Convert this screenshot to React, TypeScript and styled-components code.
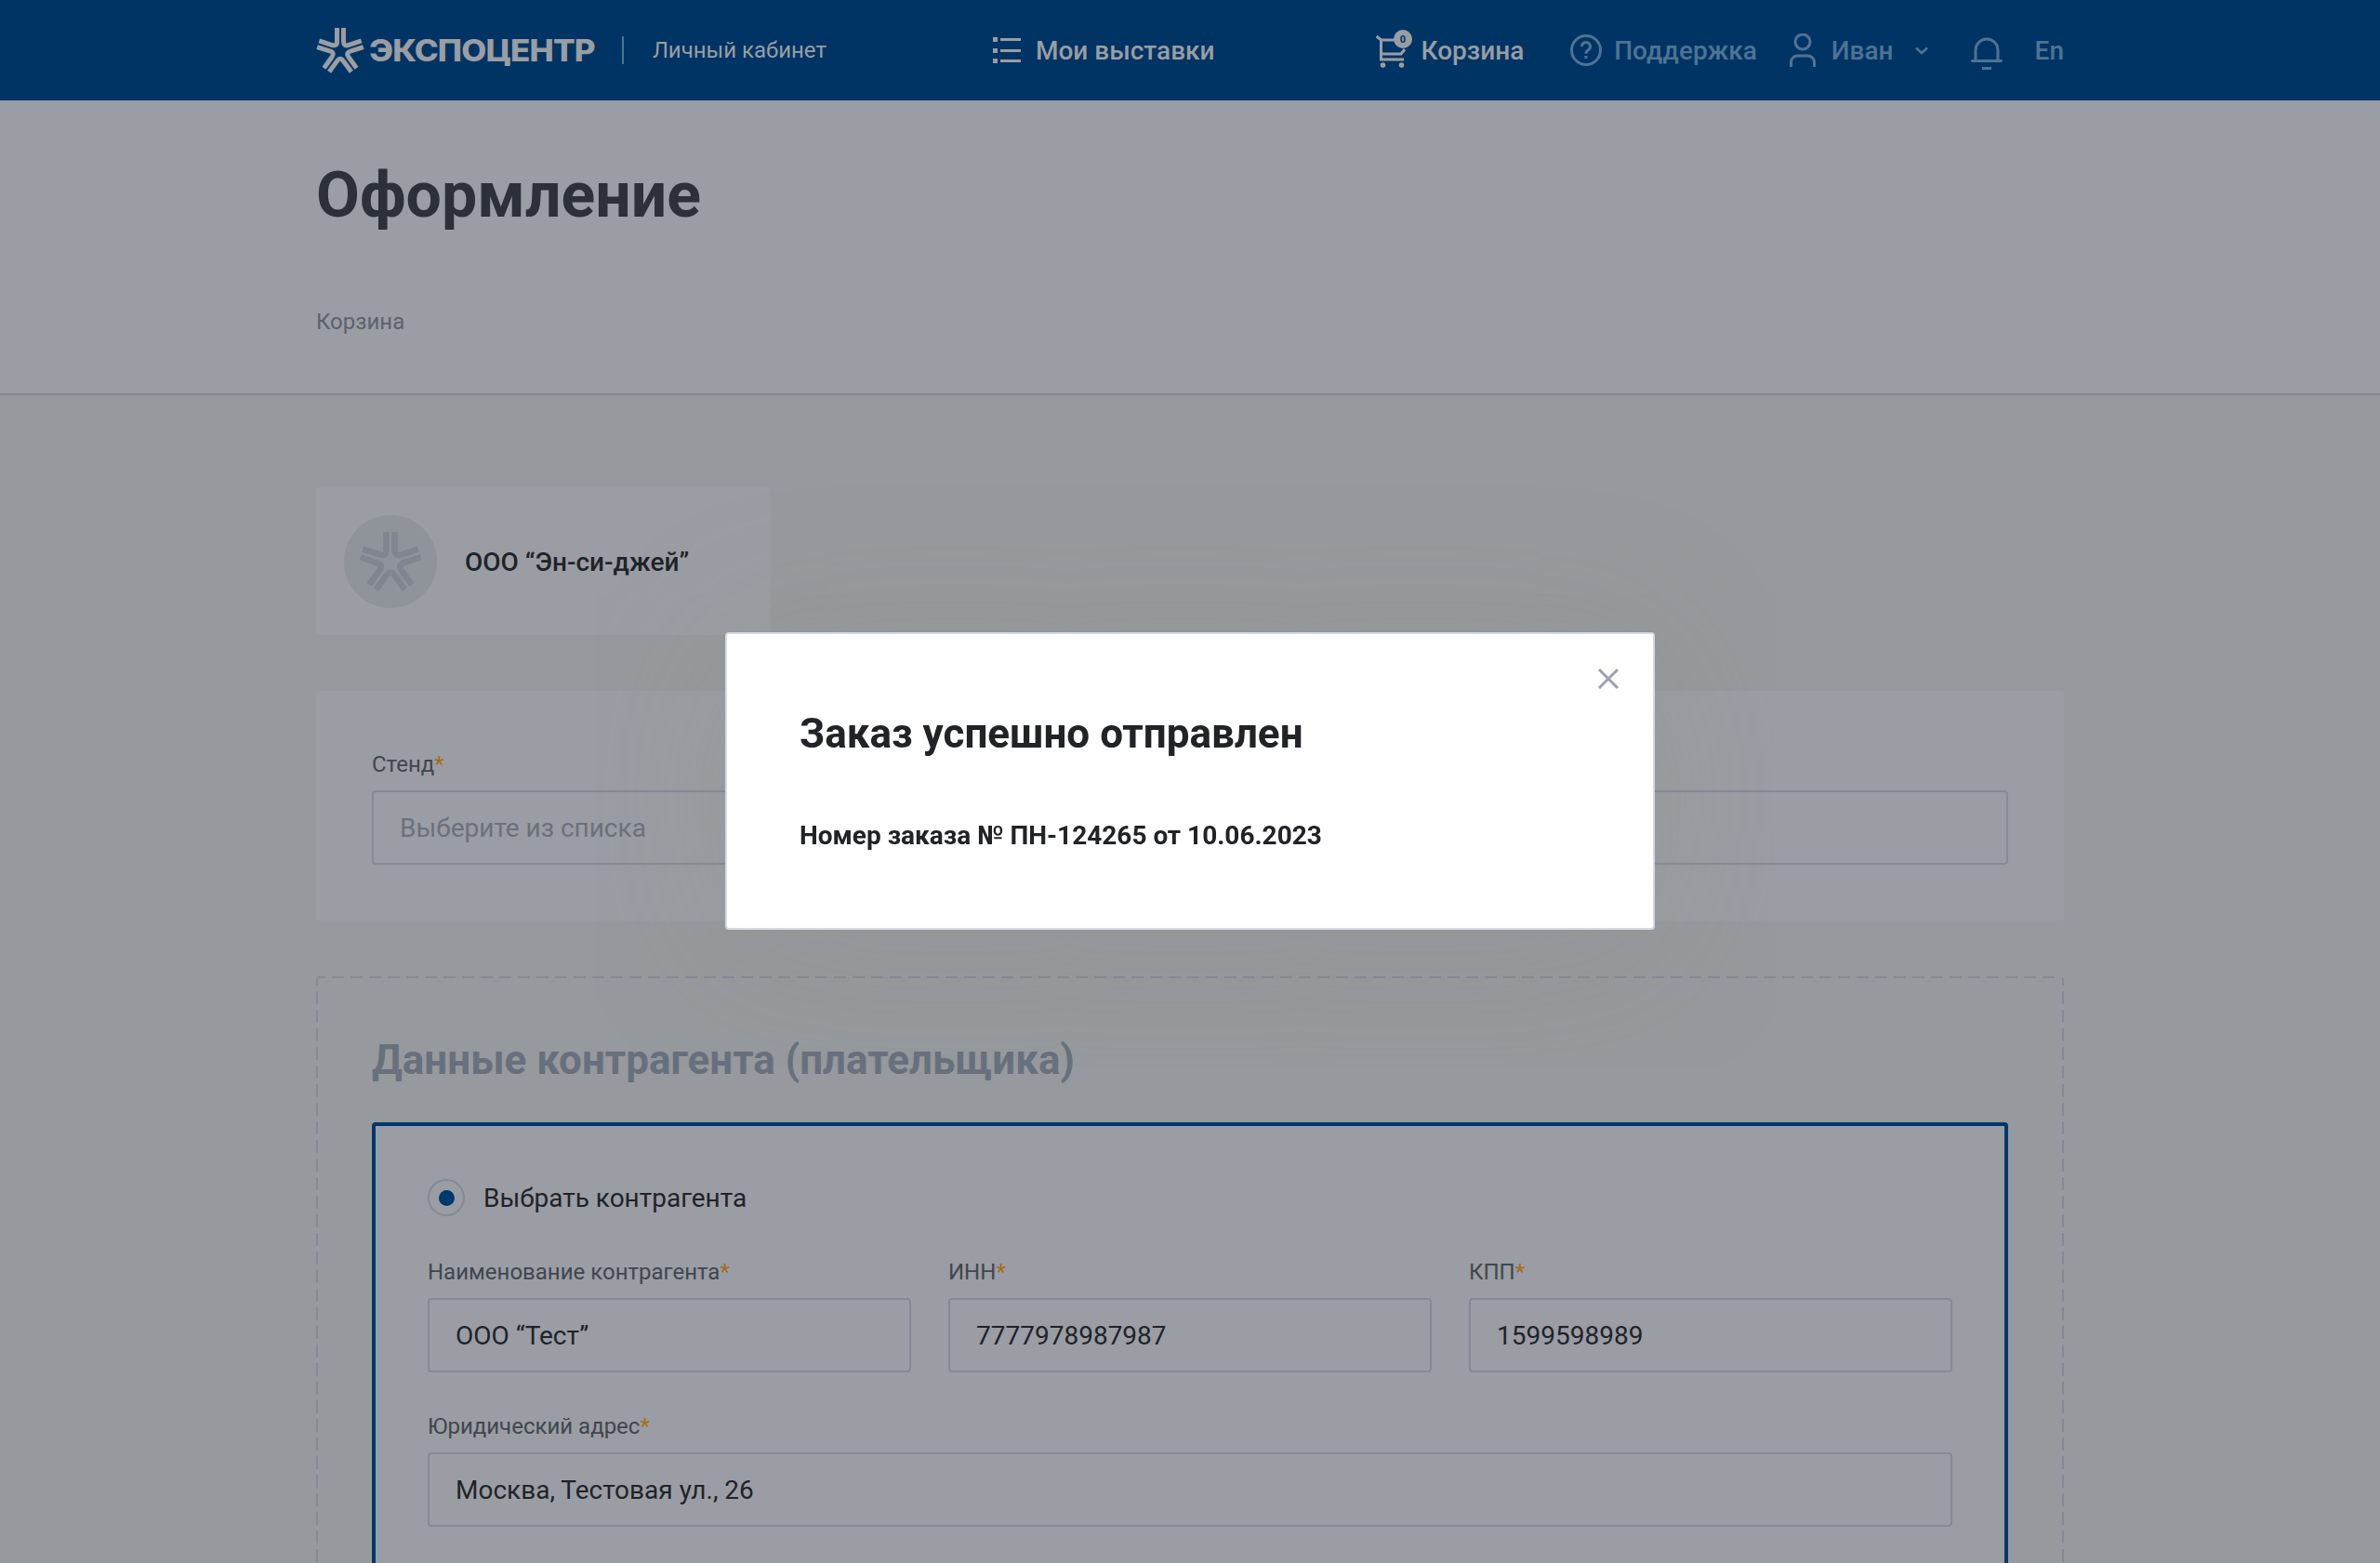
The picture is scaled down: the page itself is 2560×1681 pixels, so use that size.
import React from 'react';
import styled, { createGlobalStyle } from 'styled-components';

const Global = createGlobalStyle`
  html, body { margin: 0; padding: 0; height: 100%; overflow: hidden; background: #96999d; }
  body { font-family: Roboto, "Noto Sans", "Liberation Sans", sans-serif; }
  * { box-sizing: border-box; }
`;

const Page = styled.div`
  position: relative;
  width: 2560px;
  height: 1681px;
  overflow: hidden;
  background: #96999d;
`;
const Header = styled.header`
  height: 108px;
  background: #003464;
  display: flex;
  justify-content: center;
`;
const HeaderInner = styled.div`
  width: 1880px;
  display: flex;
  align-items: center;
`;
const WordMark = styled.span`
  display: inline-block;
  width: 245px;
  margin-left: 5px;
  font-family: Inter, "Liberation Sans", Arial, sans-serif;
  font-weight: 800;
  font-size: 32px;
  letter-spacing: -0.8px;
  color: #9a9da3;
  white-space: nowrap;
  transform: scaleX(1.095);
  transform-origin: left center;
`;
const Divider = styled.span`
  width: 2px;
  height: 30px;
  margin-left: 29px;
  background: #4f7394;
`;
const Cabinet = styled.span`
  margin-left: 31px;
  font-size: 24px;
  color: #9a9da3;
  white-space: nowrap;
`;
const NavItem = styled.div<{ $ml: number; $dim?: boolean; $mt?: number }>`
  margin-left: ${p => p.$ml}px;
  margin-top: ${p => p.$mt ?? 0}px;
  display: flex;
  align-items: center;
  font-size: 28px;
  font-weight: 500;
  white-space: nowrap;
  color: ${p => (p.$dim ? '#4f7394' : '#9a9da3')};
  svg { flex: none; }
`;
const NavLabel = styled.span<{ $ml: number }>`
  margin-left: ${p => p.$ml}px;
`;
const CartBox = styled.span`
  display: flex;
  margin-bottom: 4px;
`;
const TitleSection = styled.section`
  height: 317px;
  background: #9a9da3;
  border-bottom: 2px solid #848994;
  padding: 60px 340px 0;
`;
const Title = styled.h1`
  margin: 0;
  font-size: 68px;
  line-height: 84px;
  font-weight: 700;
  color: #2c3038;
`;
const Crumb = styled.div`
  margin-top: 78px;
  font-size: 24px;
  line-height: 32px;
  color: #5b626c;
`;
const Main = styled.main`
  padding: 99px 340px 0;
  display: flex;
  flex-direction: column;
`;
const CompanyCard = styled.div`
  width: 489px;
  height: 159px;
  padding: 0 30px;
  border-radius: 4px;
  background: #9a9da3;
  display: flex;
  align-items: center;
`;
const Avatar = styled.div`
  width: 100px;
  height: 100px;
  border-radius: 50%;
  background: #8f949b;
  display: flex;
  align-items: center;
  justify-content: center;
  flex: none;
`;
const CompanyName = styled.span`
  margin-left: 30px;
  margin-top: 2px;
  font-size: 28px;
  font-weight: 500;
  color: #1f2329;
  white-space: nowrap;
`;
const StandCard = styled.div`
  margin-top: 60px;
  height: 247px;
  padding: 62px 60px 0;
  border-radius: 4px;
  background: #9a9da3;
  display: grid;
  grid-template-columns: 1fr 1fr;
  column-gap: 40px;
  align-content: start;
`;
const Field = styled.div`
  display: flex;
  flex-direction: column;
  min-width: 0;
`;
const Label = styled.label`
  font-size: 24px;
  line-height: 34px;
  height: 45px;
  color: #40464f;
  white-space: nowrap;
`;
const Star = styled.span`
  color: #a96a17;
`;
const InputBox = styled.div<{ $placeholder?: boolean }>`
  height: 80px;
  padding: 0 28px;
  border: 2px solid #848a96;
  border-radius: 4px;
  display: flex;
  align-items: center;
  font-size: 28px;
  color: ${p => (p.$placeholder ? '#69717d' : '#1f2329')};
  white-space: nowrap;
`;
const PayerBox = styled.section`
  --dash: #848a96;
  margin-top: 60px;
  padding: 60px 60px 0;
  height: 800px;
  border-radius: 4px;
  background-image:
    repeating-linear-gradient(90deg, var(--dash) 0 13px, transparent 13px 20px),
    repeating-linear-gradient(180deg, var(--dash) 0 14px, transparent 14px 20px),
    repeating-linear-gradient(180deg, var(--dash) 0 14px, transparent 14px 20px);
  background-size: 100% 2px, 2px 100%, 2px 100%;
  background-position: -3px 0, 0 -4px, 100% -4px;
  background-repeat: no-repeat;
`;
const PayerTitle = styled.h2`
  margin: 0;
  font-size: 44px;
  line-height: 60px;
  font-weight: 700;
  color: #68707d;
  white-space: nowrap;
`;
const BlueBox = styled.div`
  margin-top: 37px;
  height: 700px;
  padding: 57px 56px 0;
  border: 4px solid #00386c;
  border-radius: 4px;
  background: #9a9da3;
`;
const RadioRow = styled.div`
  display: flex;
  align-items: center;
  height: 40px;
`;
const Radio = styled.span`
  width: 40px;
  height: 40px;
  border-radius: 50%;
  border: 2px solid #848a96;
  display: flex;
  align-items: center;
  justify-content: center;
  flex: none;
  &::after {
    content: '';
    width: 17px;
    height: 17px;
    border-radius: 50%;
    background: #00386c;
  }
`;
const RadioLabel = styled.span`
  margin-left: 20px;
  font-size: 28px;
  color: #1f2329;
`;
const FieldGrid = styled.div`
  margin-top: 43px;
  display: grid;
  grid-template-columns: repeat(3, 1fr);
  gap: 0 40px;
`;
const WideField = styled(Field)`
  margin-top: 41px;
`;
const Overlay = styled.div`
  position: fixed;
  inset: 0;
  padding-bottom: 1px;
  display: flex;
  align-items: center;
  justify-content: center;
`;
const Modal = styled.div`
  position: relative;
  width: 1000px;
  height: 320px;
  padding: 81px 78px 0;
  background: #fff;
  border: 2px solid #d5d9e3;
  border-radius: 4px;
  box-shadow: 0 20px 180px rgba(130, 140, 125, 0.22);
`;
const CloseButton = styled.button`
  position: absolute;
  top: 36px;
  right: 36px;
  width: 24px;
  height: 24px;
  padding: 0;
  border: 0;
  background: none;
  display: flex;
`;
const ModalTitle = styled.h3`
  margin: 0;
  font-size: 44px;
  line-height: 52px;
  font-weight: 700;
  color: #212326;
  white-space: nowrap;
`;
const ModalText = styled.p`
  margin: 66px 0 0;
  font-size: 28px;
  line-height: 36px;
  font-weight: 700;
  color: #212326;
  white-space: nowrap;
`;
const LogoSvg = styled.svg<{ $mt: number }>`
  flex: none;
  margin-top: ${p => p.$mt}px;
`;
const CartBadge = styled.text`
  font-family: Roboto, sans-serif;
  font-size: 11px;
  font-weight: 700;
  fill: #003464;
  text-anchor: middle;
`;

const Arm = 'M7,-50 L7,-22 Q7,-9.64 16.86,-12.84 L45.4,-22.1';
const Logo = ({ color, size, mt }: { color: string; size: number; mt: number }) => (
  <LogoSvg $mt={mt} width={size} height={size} viewBox="-52 -52 104 104">
    {[0, 72, 144, 216, 288].map(a => (
      <path key={a} d={Arm} transform={`rotate(${a})`} fill="none" stroke={color} strokeWidth={10} />
    ))}
  </LogoSvg>
);

const c = '#9a9da3';
const d = '#4f7394';

const ListIcon = () => (
  <svg width="30" height="28" viewBox="0 0 30 28">
    <g fill={c}>
      <rect x="0" y="0" width="5" height="5" />
      <rect x="0" y="12" width="5" height="5" />
      <rect x="0" y="23" width="5" height="5" />
      <rect x="8" y="1" width="22" height="3" />
      <rect x="8" y="13" width="22" height="3" />
      <rect x="8" y="24" width="22" height="3" />
    </g>
  </svg>
);
const CartIcon = () => (
  <svg width="40" height="41" viewBox="0 0 40 41">
    <g fill="none" stroke={c} strokeWidth="3">
      <path d="M0.500 7 L5.500 11 V32 H30" />
      <path d="M5.500 11 H26" />
      <path d="M5.500 26 H27 L31 21" />
    </g>
    <circle cx="7.500" cy="38" r="2.800" fill={c} />
    <circle cx="27.500" cy="38" r="2.800" fill={c} />
    <circle cx="29" cy="10" r="10" fill={c} />
    <CartBadge x="29" y="14">0</CartBadge>
  </svg>
);
const HelpIcon = () => (
  <svg width="34" height="34" viewBox="0 0 34 34">
    <circle cx="17" cy="17" r="15.500" fill="none" stroke={d} strokeWidth="3" />
    <path d="M12.500 13 a4.500 4.500 0 1 1 7 3.700 c-1.700 1.100 -2.500 2 -2.500 4" fill="none" stroke={d} strokeWidth="3" />
    <rect x="15.500" y="23" width="3" height="3" fill={d} />
  </svg>
);
const UserIcon = () => (
  <svg width="28" height="36" viewBox="0 0 28 36">
    <circle cx="14" cy="9" r="8" fill="none" stroke={d} strokeWidth="3" />
    <path d="M1.500 36 V31 a7 7 0 0 1 7 -7 h11 a7 7 0 0 1 7 7 v5" fill="none" stroke={d} strokeWidth="3" />
  </svg>
);
const Chevron = () => (
  <svg width="14" height="9" viewBox="0 0 14 9">
    <path d="M1 1.500 L7 7 L13 1.500" fill="none" stroke={d} strokeWidth="2.500" />
  </svg>
);
const BellIcon = () => (
  <svg width="34" height="36" viewBox="0 0 34 36">
    <path d="M5 26 V15 a12 12 0 0 1 24 0 V26" fill="none" stroke={d} strokeWidth="3" />
    <rect x="0" y="25" width="34" height="3" rx="1.500" fill={d} />
    <rect x="12" y="33" width="10" height="3" fill={d} />
  </svg>
);
const CloseIcon = () => (
  <svg width="24" height="24" viewBox="0 0 24 24">
    <path d="M2 2 L22 22 M22 2 L2 22" stroke="#9ba2b0" strokeWidth="3" fill="none" />
  </svg>
);

export default function App() {
  return (
    <Page>
      <Global />
      <Header>
        <HeaderInner>
          <Logo color={c} size={52} mt={2} />
          <WordMark>ЭКСПОЦЕНТР</WordMark>
          <Divider />
          <Cabinet>Личный кабинет</Cabinet>
          <NavItem $ml={179}>
            <ListIcon />
            <NavLabel $ml={16}>Мои выставки</NavLabel>
          </NavItem>
          <NavItem $ml={173}>
            <CartBox><CartIcon /></CartBox>
            <NavLabel $ml={9}>Корзина</NavLabel>
          </NavItem>
          <NavItem $ml={50} $dim>
            <HelpIcon />
            <NavLabel $ml={13}>Поддержка</NavLabel>
          </NavItem>
          <NavItem $ml={35} $dim>
            <UserIcon />
            <NavLabel $ml={17}>Иван</NavLabel>
          </NavItem>
          <NavItem $ml={23} $dim>
            <Chevron />
          </NavItem>
          <NavItem $ml={46} $mt={6} $dim>
            <BellIcon />
          </NavItem>
          <NavItem $ml={35} $dim>En</NavItem>
        </HeaderInner>
      </Header>
      <TitleSection>
        <Title>Оформление</Title>
        <Crumb>Корзина</Crumb>
      </TitleSection>
      <Main>
        <CompanyCard>
          <Avatar>
            <Logo color="#80858f" size={68} mt={3} />
          </Avatar>
          <CompanyName>ООО “Эн-си-джей”</CompanyName>
        </CompanyCard>
        <StandCard>
          <Field>
            <Label>Стенд<Star>*</Star></Label>
            <InputBox $placeholder>Выберите из списка</InputBox>
          </Field>
          <Field>
            <Label />
            <InputBox />
          </Field>
        </StandCard>
        <PayerBox>
          <PayerTitle>Данные контрагента (плательщика)</PayerTitle>
          <BlueBox>
            <RadioRow>
              <Radio />
              <RadioLabel>Выбрать контрагента</RadioLabel>
            </RadioRow>
            <FieldGrid>
              <Field>
                <Label>Наименование контрагента<Star>*</Star></Label>
                <InputBox>ООО “Тест”</InputBox>
              </Field>
              <Field>
                <Label>ИНН<Star>*</Star></Label>
                <InputBox>7777978987987</InputBox>
              </Field>
              <Field>
                <Label>КПП<Star>*</Star></Label>
                <InputBox>1599598989</InputBox>
              </Field>
            </FieldGrid>
            <WideField>
              <Label>Юридический адрес<Star>*</Star></Label>
              <InputBox>Москва, Тестовая ул., 26</InputBox>
            </WideField>
          </BlueBox>
        </PayerBox>
      </Main>
      <Overlay>
        <Modal>
          <CloseButton aria-label="Закрыть"><CloseIcon /></CloseButton>
          <ModalTitle>Заказ успешно отправлен</ModalTitle>
          <ModalText>Номер заказа № ПН-124265 от 10.06.2023</ModalText>
        </Modal>
      </Overlay>
    </Page>
  );
}
